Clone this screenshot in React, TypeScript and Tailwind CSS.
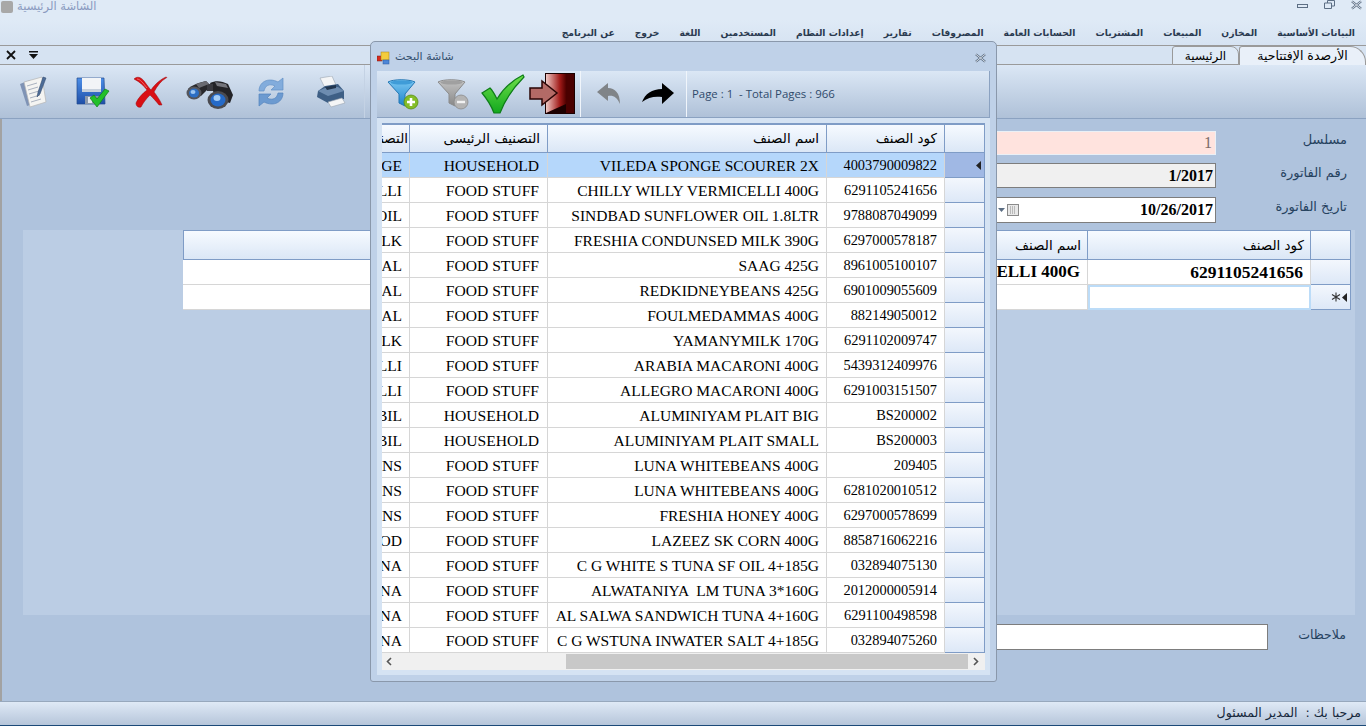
import React from "react";

const menuItems = [
  "البيانات الأساسية",
  "المخازن",
  "المبيعات",
  "المشتريات",
  "الحسابات العامة",
  "المصروفات",
  "تقارير",
  "إعدادات النظام",
  "المستخدمين",
  "اللغة",
  "خروج",
  "عن البرنامج",
];

const rows = [
  ["4003790009822", "VILEDA SPONGE SCOURER 2X", "HOUSEHOLD", "SPONGE"],
  ["6291105241656", "CHILLY WILLY VERMICELLI 400G", "FOOD STUFF", "VERMICELLI"],
  ["9788087049099", "SINDBAD SUNFLOWER OIL 1.8LTR", "FOOD STUFF", "OIL"],
  ["6297000578187", "FRESHIA CONDUNSED MILK 390G", "FOOD STUFF", "MILK"],
  ["8961005100107", "SAAG 425G", "FOOD STUFF", "MEAL"],
  ["6901009055609", "REDKIDNEYBEANS 425G", "FOOD STUFF", "MEAL"],
  ["882149050012", "FOULMEDAMMAS 400G", "FOOD STUFF", "MEAL"],
  ["6291102009747", "YAMANYMILK 170G", "FOOD STUFF", "MILK"],
  ["5439312409976", "ARABIA MACARONI 400G", "FOOD STUFF", "VERMICELLI"],
  ["6291003151507", "ALLEGRO MACARONI 400G", "FOOD STUFF", "VERMICELLI"],
  ["BS200002", "ALUMINIYAM PLAIT BIG", "HOUSEHOLD", "BIL"],
  ["BS200003", "ALUMINIYAM PLAIT SMALL", "HOUSEHOLD", "BIL"],
  ["209405", "LUNA WHITEBEANS 400G", "FOOD STUFF", "BEANS"],
  ["6281020010512", "LUNA WHITEBEANS 400G", "FOOD STUFF", "BEANS"],
  ["6297000578699", "FRESHIA HONEY 400G", "FOOD STUFF", "BEANS"],
  ["8858716062216", "LAZEEZ SK CORN 400G", "FOOD STUFF", "FOOD"],
  ["032894075130", "C G WHITE S TUNA SF OIL 4+185G", "FOOD STUFF", "TUNA"],
  ["2012000005914", "ALWATANIYA  LM TUNA 3*160G", "FOOD STUFF", "TUNA"],
  ["6291100498598", "AL SALWA SANDWICH TUNA 4+160G", "FOOD STUFF", "TUNA"],
  ["032894075260", "C G WSTUNA INWATER SALT 4+185G", "FOOD STUFF", "TUNA"],
];

const headCell =
  "shrink-0 flex items-center justify-end overflow-hidden whitespace-nowrap border border-l-0 border-[#7f9cc6] bg-gradient-to-b from-[#f6faff] to-[#dbe7f6] font-['DejaVu_Sans',sans-serif] text-[13.5px] text-black";
const bodyCell =
  "shrink-0 flex items-center justify-end overflow-hidden whitespace-pre border-r border-b border-[#d6d6d6] font-['Liberation_Serif',serif] text-black";

const RowMark = () => (
  <svg width="5" height="9" viewBox="0 0 5 9">
    <path d="M5 0 V9 L0 4.5 Z" fill="#222" />
  </svg>
);

const CloseGlyph = () => (
  <svg width="11" height="10" viewBox="0 0 12 10">
    <path d="M1 1 L11 9 M11 1 L1 9" stroke="#5c6e84" strokeWidth="2.4" />
    <path d="M1 1 L11 9 M11 1 L1 9" stroke="#f0f4f8" strokeWidth="0.9" />
  </svg>
);

const IconNotes = () => (
  <svg width="32" height="34" viewBox="0 0 32 34">
    <path d="M3 9 L13 5 L19 28 L10 31 Z" fill="#7f93b5" />
    <path d="M7 7 L25 2 L29 27 L13 32 Z" fill="#f4f4f2" stroke="#b4b4b4" strokeWidth="0.7" />
    <path d="M10 11 L20 8 M11 15 L21 12 M12 19 L22 16 M13 23 L23 20 M14 27 L24 24" stroke="#aab2c0" strokeWidth="1" />
    <path d="M26 2 L29 3 L23 19 L20 22 L21 17 Z" fill="#4c6b96" stroke="#2c4468" strokeWidth="0.5" />
  </svg>
);

const IconSave = () => (
  <svg width="34" height="32" viewBox="0 0 34 32">
    <defs>
      <linearGradient id="fl" x1="0" y1="0" x2="0" y2="1">
        <stop offset="0" stopColor="#4d8fe8" />
        <stop offset="1" stopColor="#1f4fa8" />
      </linearGradient>
    </defs>
    <path d="M1 2 H28 L29 28 H1 Z" fill="url(#fl)" stroke="#234a8c" strokeWidth="0.7" />
    <rect x="6" y="2" width="19" height="14" fill="#f2f4f7" />
    <rect x="6" y="13" width="19" height="3" fill="#c6d0dc" />
    <rect x="9" y="20" width="15" height="8" fill="#8b98aa" />
    <rect x="12" y="21" width="4" height="6" fill="#e4e8ee" />
    <path d="M14 22 L18 19 L21 23 L29 13 L33 15 L21 31 Z" fill="#22c02a" stroke="#0f7f16" strokeWidth="0.7" />
  </svg>
);

const IconCross = () => (
  <svg width="34" height="32" viewBox="0 0 34 32">
    <path
      d="M0 3 C3 0 7 1 10 5 C13 9 15 12 17 14 C21 8 27 3 32 1 C33 1 33 2 32 2 C27 5 23 10 20 16 C23 20 26 24 28 29 L25 29 C22 25 19 22 16 19 C12 23 9 27 7 31 C4 32 2 30 2 27 C4 22 9 17 13 14 C10 10 6 6 0 3 Z"
      fill="#d90f14"
      stroke="#9a0a0e"
      strokeWidth="0.5"
    />
    <path d="M3 3 C6 3 9 7 13 12" stroke="#f47d7d" strokeWidth="0.8" fill="none" />
  </svg>
);

const IconBinoculars = () => (
  <svg width="48" height="32" viewBox="0 0 48 32">
    <path d="M2 10 C6 6 12 4 20 2 L25 7 L15 17 L6 19 Z" fill="#28282c" />
    <path d="M24 4 C30 1 36 2 42 5 L47 16 L44 24 L30 20 Z" fill="#232327" />
    <path d="M21 5 H27 V12 H21 Z" fill="#3a3a40" />
    <path d="M10 5 L20 2 L23 5 L13 9 Z" fill="#6a6b72" />
    <path d="M29 3 L40 5 L42 9 L31 7 Z" fill="#74757c" />
    <ellipse cx="8" cy="14" rx="7.5" ry="6.5" fill="#55565c" />
    <ellipse cx="8" cy="14" rx="5" ry="4.5" fill="#2c6ec4" />
    <ellipse cx="7" cy="13" rx="2.5" ry="2" fill="#9cc6f2" />
    <ellipse cx="32" cy="21" rx="10.5" ry="9" fill="#4a4b51" />
    <ellipse cx="32" cy="21" rx="7.5" ry="6.5" fill="#256ac8" />
    <ellipse cx="31" cy="19" rx="3.5" ry="3" fill="#a3ccf6" />
  </svg>
);

const IconRefresh = () => (
  <svg width="30" height="32" viewBox="0 0 30 32">
    <path d="M3 15 C3 6 12 1 22 6 L27 2 L27 14 L15 14 L19 10 C13 7 9 10 8 15 Z" fill="#82acdc" stroke="#6390c6" strokeWidth="0.7" />
    <path d="M27 17 C27 26 18 31 8 26 L3 30 L3 18 L15 18 L11 22 C17 25 21 22 22 17 Z" fill="#6c9ad0" stroke="#5584bd" strokeWidth="0.7" />
  </svg>
);

const IconPrinter = () => (
  <svg width="30" height="32" viewBox="0 0 30 32">
    <path d="M4 2 L16 0 L20 9 L9 12 Z" fill="#f4f5f6" stroke="#9aa4b0" strokeWidth="0.6" />
    <path d="M2 15 L9 10 L22 8 L28 15 L28 23 L12 27 L1 21 Z" fill="#3e5f85" />
    <path d="M2 15 L12 20 L28 15 L22 11 L9 12 Z" fill="#6d8cb0" />
    <path d="M9 11 L20 9 L20 12 L11 14 Z" fill="#22364f" />
    <path d="M12 26 L26 22 L29 27 L15 31 Z" fill="#f4f5f6" stroke="#9aa4b0" strokeWidth="0.6" />
  </svg>
);

const IconFunnel = ({ muted }: { muted?: boolean }) => {
  const id = muted ? "fg" : "fb";
  return (
    <svg width="32" height="32" viewBox="0 0 32 32">
      <defs>
        <linearGradient id={id} x1="0" y1="0" x2="0" y2="1">
          <stop offset="0" stopColor={muted ? "#c4c4c4" : "#7cc8f2"} />
          <stop offset="1" stopColor={muted ? "#888888" : "#1c83cc"} />
        </linearGradient>
      </defs>
      <path d="M1 4 C6 1 22 1 28 4 L18 16 L18 28 L12 25 L12 16 Z" fill={`url(#${id})`} stroke={muted ? "#8b8b8b" : "#2477b4"} strokeWidth="1" />
      <ellipse cx="14.5" cy="4.5" rx="11" ry="2" fill={muted ? "#a0a0a0" : "#3f9cd8"} />
      <circle cx="24" cy="24" r="7" fill={muted ? "#b4b4b4" : "#84bd28"} stroke={muted ? "#8b8b8b" : "#5a8f14"} strokeWidth="0.8" />
      {muted ? (
        <rect x="20" y="22.8" width="8" height="2.4" fill="#f2f2f2" />
      ) : (
        <path d="M22.7 20 H25.3 V22.7 H28 V25.3 H25.3 V28 H22.7 V25.3 H20 V22.7 H22.7 Z" fill="#fff" />
      )}
    </svg>
  );
};

const IconCheck = () => (
  <svg width="44" height="40" viewBox="0 0 44 40">
    <defs>
      <linearGradient id="ck" x1="0" y1="0" x2="0" y2="1">
        <stop offset="0" stopColor="#6fe04a" />
        <stop offset="1" stopColor="#12a81e" />
      </linearGradient>
    </defs>
    <path d="M1 19 L9 14 C12 17 14 21 16 25 C22 15 32 6 42 1 L43 3 C34 12 24 26 19 39 L13 39 C10 31 6 25 1 19 Z" fill="url(#ck)" stroke="#0e7d18" strokeWidth="1.2" />
  </svg>
);

const IconExit = () => (
  <svg width="46" height="42" viewBox="0 0 46 42">
    <defs>
      <linearGradient id="dr" x1="0" y1="0" x2="1" y2="0">
        <stop offset="0" stopColor="#f0c8c4" />
        <stop offset="0.7" stopColor="#a01a18" />
        <stop offset="1" stopColor="#500000" />
      </linearGradient>
    </defs>
    <rect x="16" y="0" width="30" height="41" fill="#1c0000" />
    <path d="M17 1 L37 1 L37 31 L17 40 Z" fill="url(#dr)" />
    <rect x="37" y="1" width="8" height="39" fill="#4a0000" />
    <path d="M1 15 L13 15 L13 8 L28 20 L13 32 L13 26 L1 26 Z" fill="#b36a66" stroke="#2a0505" strokeWidth="1.5" />
  </svg>
);

const IconBack = () => (
  <svg width="24" height="22" viewBox="0 0 24 22">
    <path d="M0 9 L11 0 L11 5 C18 5 23 10 23 21 C20 14 16 12 11 13 L11 18 Z" fill="#808488" />
  </svg>
);

const IconForward = () => (
  <svg width="32" height="22" viewBox="0 0 32 22">
    <path d="M32 10 L20 0 L20 6 C10 6 3 11 0 19 C6 14 13 13 20 14 L20 21 Z" fill="#000" />
  </svg>
);

const SearchDialog = () => (
  <div className="absolute left-[370px] top-[41px] flex h-[641px] w-[627px] flex-col rounded-t-[5px] rounded-b-[3px] border border-[#8a98ab] bg-[#bfd1e8]">
    <div className="flex h-[29px] shrink-0 items-center justify-between pl-[6px] pr-[10px] pt-[2px]">
      <div className="flex items-center gap-[4px]">
        <svg width="14" height="14" viewBox="0 0 14 14">
          <rect x="0" y="5" width="5" height="5" fill="#d62a1e" stroke="#7a1a12" strokeWidth="0.5" />
          <rect x="4" y="1" width="8" height="8" fill="#f4cc3c" stroke="#a5801c" strokeWidth="0.5" />
          <rect x="6" y="9" width="6" height="4" fill="#4c86d8" stroke="#2c5a9c" strokeWidth="0.5" />
        </svg>
        <span className="font-['DejaVu_Sans',sans-serif] text-[11px] text-[#34506f]">شاشة البحث</span>
      </div>
      <CloseGlyph />
    </div>
    <div className="mx-[6px] flex h-[604px] flex-col bg-[#d5e3f3]">
      <div className="flex h-[47px] shrink-0 items-center border-r border-b border-[#8ba2c1] bg-gradient-to-b from-[#dbe7f5] to-[#afc1d8]">
        <div className="w-[10px] shrink-0" />
        <div className="flex w-[50px] shrink-0"><IconFunnel /></div>
        <div className="flex w-[44px] shrink-0"><IconFunnel muted /></div>
        <div className="flex w-[48px] shrink-0"><IconCheck /></div>
        <div className="flex w-[51px] shrink-0"><IconExit /></div>
        <div className="h-full w-px shrink-0 bg-[#f0f5fb]" />
        <div className="ml-[16px] flex w-[45px] shrink-0"><IconBack /></div>
        <div className="flex w-[44px] shrink-0"><IconForward /></div>
        <div className="h-full w-px shrink-0 bg-[#f0f5fb]" />
        <span className="ml-[5px] whitespace-pre font-['Open_Sans',sans-serif] text-[11.4px] text-[#2f4a6b]">Page : 1  - Total Pages : 966</span>
      </div>
      <div className="ml-[5px] mr-[5px] mt-[5px] flex flex-col overflow-hidden bg-white">
        <div className="flex h-[30px] shrink-0 justify-end border-t border-[#7f9cc6]">
          <div className={`${headCell} w-[29px] pr-[1px]`}>التصنيف الفرعي</div>
          <div className={`${headCell} w-[138px] pr-[7px]`}>التصنيف الرئيسى</div>
          <div className={`${headCell} w-[279px] pr-[7px]`}>اسم الصنف</div>
          <div className={`${headCell} w-[118px] pr-[7px]`}>كود الصنف</div>
          <div className={`${headCell} w-[40px]`} />
        </div>
        {rows.map((r, i) => (
          <div key={r[0]} className={`flex h-[25px] shrink-0 justify-end ${i === 0 ? "bg-[#b5d7fb]" : "bg-white"}`}>
            <div className={`${bodyCell} w-[29px] pr-[7px] pt-[1px] text-[15.6px]`}>{r[3]}</div>
            <div className={`${bodyCell} w-[138px] pr-[8px] pt-[1px] text-[15.6px]`}>{r[2]}</div>
            <div className={`${bodyCell} w-[279px] pr-[7px] pt-[1px] text-[15.5px]`}>{r[1]}</div>
            <div className={`${bodyCell} w-[118px] pr-[7px] pt-[2px] text-[14.4px]`}>{r[0]}</div>
            <div
              className={`flex w-[40px] shrink-0 items-center justify-end border-r border-b border-[#7f9cc6] pr-[3px] ${
                i === 0 ? "bg-[#a0b8e4]" : "bg-gradient-to-b from-[#f3f7fd] to-[#dde8f7]"
              }`}
            >
              {i === 0 && <RowMark />}
            </div>
          </div>
        ))}
        <div className="flex h-[17px] shrink-0 items-center bg-[#f0f0f0]">
          <svg className="ml-[4px]" width="6" height="9" viewBox="0 0 6 9">
            <path d="M5 1 L1.5 4.5 L5 8" stroke="#555" strokeWidth="1.6" fill="none" />
          </svg>
          <div className="ml-[174px] h-[15px] w-[402px] bg-[#c8c8c8]" />
          <svg className="ml-[5px]" width="6" height="9" viewBox="0 0 6 9">
            <path d="M1 1 L4.5 4.5 L1 8" stroke="#555" strokeWidth="1.6" fill="none" />
          </svg>
        </div>
      </div>
    </div>
  </div>
);

const FormRow = ({ label, height, children }: { label: string; height: string; children: React.ReactNode }) => (
  <div className={`flex items-center justify-end ${height}`}>
    {children}
    <span className="w-[131px] shrink-0 pb-[6px] text-right font-['DejaVu_Sans',sans-serif] text-[13px] text-[#26425f]">{label}</span>
  </div>
);

export default function App() {
  return (
    <div className="relative flex h-[726px] w-[1366px] flex-col overflow-hidden bg-[#afc3dd]">
      {/* title bar */}
      <div className="flex h-[20px] shrink-0 items-start justify-between bg-[#dfeaf6] pl-[1px] pr-[4px]">
        <div className="flex items-center gap-[4px]">
          <div className="h-[12px] w-[12px] rounded-[2px] bg-[#a8a8a8]" />
          <span className="font-['DejaVu_Sans',sans-serif] text-[11.5px] leading-[13px] text-[#8a9ac0]">الشاشة الرئيسية</span>
        </div>
        <div className="flex items-start gap-[16px]">
          <svg width="11" height="11" viewBox="0 0 11 11">
            <rect x="0.5" y="4.5" width="10" height="3" fill="none" stroke="#5c6e84" />
          </svg>
          <svg width="11" height="11" viewBox="0 0 11 11">
            <path d="M3.5 3 V0.5 H10.5 V6 H8 M0.5 3 H7.5 V8.5 H0.5 Z" fill="none" stroke="#5c6e84" />
          </svg>
          <CloseGlyph />
        </div>
      </div>

      {/* menu */}
      <div dir="rtl" className="flex h-[25px] shrink-0 items-center gap-[20px] bg-gradient-to-b from-[#dfeaf6] to-[#d6e3f2] pr-[11px]">
        {menuItems.map((m) => (
          <span key={m} className="whitespace-nowrap font-['DejaVu_Sans',sans-serif] text-[9.2px] font-bold text-[#2a3a50]">
            {m}
          </span>
        ))}
      </div>

      {/* tab strip */}
      <div className="flex h-[20px] shrink-0 items-end justify-between border-t border-b border-t-[#9a9a9a] border-b-[#9a9a9a] bg-[#d6e3f2]">
        <div className="flex items-center gap-[13px] self-center pl-[6px]">
          <svg width="10" height="10" viewBox="0 0 10 10">
            <path d="M1 1 L9 9 M9 1 L1 9" stroke="#111" strokeWidth="1.8" />
          </svg>
          <svg width="9" height="8" viewBox="0 0 9 8">
            <rect x="0" y="0" width="9" height="1.5" fill="#111" />
            <path d="M0 3 H9 L4.5 8 Z" fill="#111" />
          </svg>
        </div>
        <div className="-mb-px flex h-[19px] items-stretch">
          <div className="flex w-[67px] items-center justify-center rounded-tl-[3px] rounded-tr-[8px] border border-[#9a9a9a] bg-[#dfeaf6] font-['DejaVu_Sans',sans-serif] text-[12px] text-black">
            الرئيسية
          </div>
          <div className="flex w-[127px] items-center justify-center rounded-tl-[3px] rounded-tr-[16px] border border-b-0 border-[#9a9a9a] bg-[#e9f0f9] font-['DejaVu_Sans',sans-serif] text-[12.5px] text-black">
            الأرصدة الإفتتاحية
          </div>
        </div>
      </div>

      {/* toolbar */}
      <div className="flex h-[54px] shrink-0 items-center border-b border-[#8ba2c1] bg-gradient-to-b from-[#dbe7f5] to-[#afc1d8] pl-[3px]">
        <div className="flex w-[60px] justify-center"><IconNotes /></div>
        <div className="flex w-[59px] justify-center"><IconSave /></div>
        <div className="flex w-[58px] justify-center"><IconCross /></div>
        <div className="flex w-[60px] justify-center pt-[6px]"><IconBinoculars /></div>
        <div className="flex w-[61px] justify-center"><IconRefresh /></div>
        <div className="flex w-[60px] justify-center"><IconPrinter /></div>
        <div className="ml-[3px] h-full w-px bg-[#c4d2e4]" />
      </div>

      {/* form */}
      <div className="flex min-h-0 flex-1 flex-col border-l-2 border-[#a2a2a2] pt-[12px]">
        <div className="flex flex-col pr-[19px]">
          <FormRow label="مسلسل" height="h-[24px]">
            <div className="flex h-[24px] w-[500px] items-center justify-end border border-[#eaf0f6] bg-[#ffe3de] pr-[3px] font-['Liberation_Serif',serif] text-[16px] text-[#7a6a68]">
              1
            </div>
          </FormRow>
          <FormRow label="رقم الفاتورة" height="mt-[8px] h-[25px]">
            <div className="flex h-[25px] w-[500px] items-center justify-end border border-[#7d7d7d] bg-[#f0f0f0] pr-[2px] font-['Liberation_Serif',serif] text-[16px] font-bold text-black">
              1/2017
            </div>
          </FormRow>
          <FormRow label="تاريخ الفاتورة" height="mt-[9px] h-[26px]">
            <div className="flex h-[26px] w-[500px] items-center justify-between border border-[#7d7d7d] bg-white pr-[2px] font-['Liberation_Serif',serif] text-[16px] font-bold text-black">
              <div className="ml-[281px] flex items-center gap-[2px]">
                <svg width="7" height="4" viewBox="0 0 7 4">
                  <path d="M0 0 H7 L3.5 4 Z" fill="#5c6e84" />
                </svg>
                <svg width="12" height="12" viewBox="0 0 12 12">
                  <rect x="0.5" y="0.5" width="11" height="11" fill="#e8e8e8" stroke="#8a8a8a" />
                  <path d="M3 3 H9 M3 5 H9 M3 7 H9 M3 9 H9" stroke="#8a8a8a" strokeDasharray="1 1" />
                </svg>
              </div>
              10/26/2017
            </div>
          </FormRow>
        </div>

        <div className="ml-[21px] mr-[11px] mt-[7px] flex h-[385px] shrink-0 flex-col items-end bg-[#bbcde4] pr-[4px]">
          <div className="flex h-[30px] w-[1168px] shrink-0 border-l border-[#7f9cc6]">
            <div className={`${headCell} flex-1 border-t`} />
            <div className={`${headCell} w-[223px] border-t pr-[6px]`}>اسم الصنف</div>
            <div className={`${headCell} w-[223px] border-t pr-[6px]`}>كود الصنف</div>
            <div className={`${headCell} w-[40px] border-t`} />
          </div>
          <div className="flex h-[25px] w-[1168px] shrink-0 bg-white">
            <div className={`${bodyCell} flex-1`} />
            <div className={`${bodyCell} w-[223px] pr-[7px] text-[17px] font-bold`}>CHILLY WILLY VERMICELLI 400G</div>
            <div className={`${bodyCell} w-[223px] pr-[7px] text-[17.5px] font-bold`}>6291105241656</div>
            <div className="w-[40px] shrink-0 border-r border-b border-[#7f9cc6] bg-gradient-to-b from-[#f3f7fd] to-[#dde8f7]" />
          </div>
          <div className="flex h-[25px] w-[1168px] shrink-0 bg-white">
            <div className={`${bodyCell} flex-1`} />
            <div className={`${bodyCell} w-[223px]`} />
            <div className="w-[223px] shrink-0 border-2 border-[#bcdcf8] bg-white" />
            <div className="flex w-[40px] shrink-0 items-center justify-end gap-[1px] border-r border-b border-[#7f9cc6] bg-gradient-to-b from-[#f3f7fd] to-[#dde8f7] pr-[3px]">
              <svg width="10" height="10" viewBox="0 0 10 10">
                <path d="M5 0.5 V9.5 M1 2.5 L9 7.5 M9 2.5 L1 7.5" stroke="#333" strokeWidth="1.1" />
              </svg>
              <RowMark />
            </div>
          </div>
        </div>

        <div className="mt-[9px] flex items-center justify-end pr-[20px]">
          <div className="h-[26px] w-[500px] border border-[#7d7d7d] bg-white" />
          <span className="w-[78px] shrink-0 pb-[4px] text-right font-['DejaVu_Sans',sans-serif] text-[12.5px] text-[#26425f]">ملاحظات</span>
        </div>
      </div>

      {/* status bar */}
      <div className="flex h-[25px] shrink-0 items-center justify-end border-t border-b border-t-[#97a8bd] border-b-[#1c4a78] bg-gradient-to-b from-[#dfe9f6] to-[#b6c6da] pr-[5px] font-['DejaVu_Sans',sans-serif] text-[12.6px] text-[#16283c]">
        <span dir="rtl" className="whitespace-pre">مرحبا بك :  المدير المسئول</span>
      </div>

      <SearchDialog />
    </div>
  );
}
